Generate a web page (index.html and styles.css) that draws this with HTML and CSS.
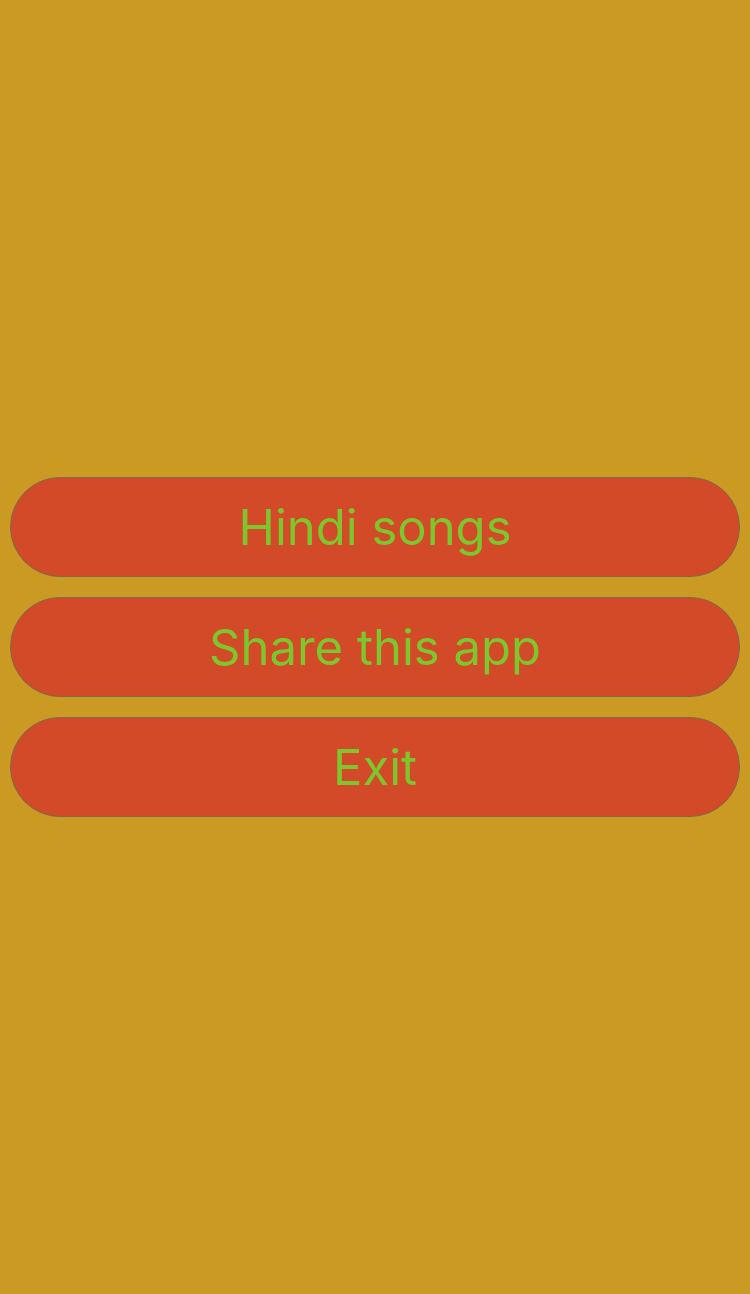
FILE: index.html
```html
<!DOCTYPE html>
<html>
<head>
<meta charset="utf-8">
<link rel="stylesheet" href="styles.css">
</head>
<body>
<main class="screen">
  <div class="menu">
    <button class="btn">Hindi songs</button>
    <button class="btn">Share this app</button>
    <button class="btn">Exit</button>
  </div>
</main>
</body>
</html>
```
FILE: styles.css
```css
html, body {
  margin: 0;
  padding: 0;
  background: #ca9a22;
}
.screen {
  width: 750px;
  height: 1294px;
  display: flex;
  flex-direction: column;
  justify-content: center;
  padding: 0 10px;
  box-sizing: border-box;
}
.menu {
  display: flex;
  flex-direction: column;
  gap: 20px;
}
.btn {
  height: 100px;
  width: 100%;
  margin: 0;
  border: 1px solid #7d6a4c;
  border-radius: 50px;
  background: #d24a27;
  color: #7dc62e;
  font-family: Inter, "Noto Sans", sans-serif;
  font-size: 49px;
  font-weight: 400;
  padding: 0;
  display: flex;
  align-items: center;
  justify-content: center;
  box-sizing: border-box;
}
```
